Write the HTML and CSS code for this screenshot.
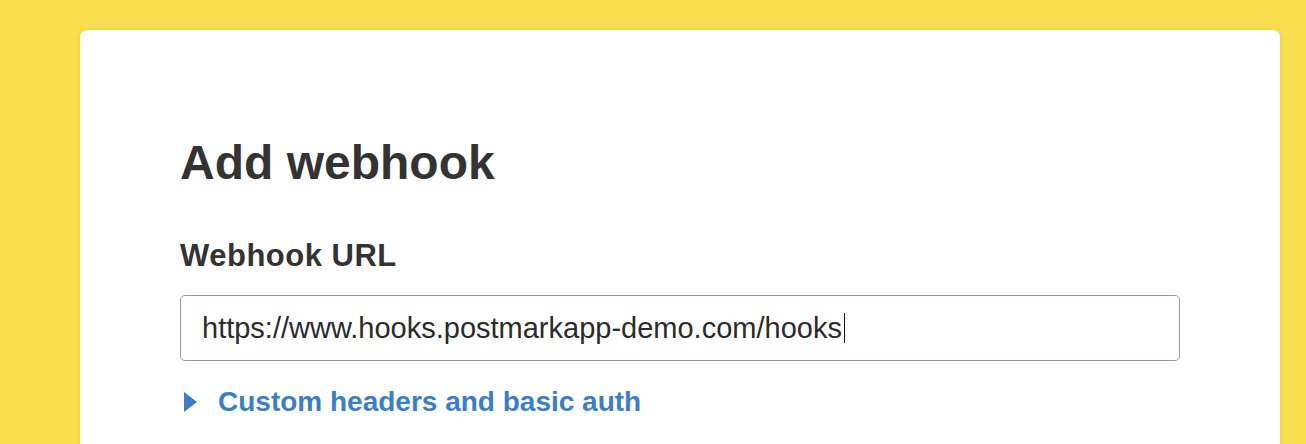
FILE: index.html
```html
<!DOCTYPE html>
<html lang="en">
<head>
<meta charset="utf-8">
<title>Add webhook</title>
<link rel="stylesheet" href="styles.css">
</head>
<body>
<main class="card">
  <h1 class="title">Add webhook</h1>
  <form class="form">
    <label class="label" for="url">Webhook URL</label>
    <div class="input"><span class="input-text">https://www.hooks.postmarkapp-demo.com/hooks</span><span class="caret"></span></div>
    <a class="toggle" href="#">
      <svg class="tri" width="13" height="20" viewBox="0 0 13 20"><polygon points="0,0 13,10 0,20" fill="#3a7ec8"/></svg>
      <span>Custom headers and basic auth</span>
    </a>
  </form>
</main>
</body>
</html>
```

FILE: styles.css
```css
html, body {
  margin: 0;
  padding: 0;
  background: #f9df4f;
  height: 100%;
  overflow: hidden;
}
body {
  font-family: "Liberation Sans", Arial, Helvetica, sans-serif;
  color: #333333;
}
.card {
  box-sizing: border-box;
  margin: 30px 0 0 80px;
  width: 1200px;
  height: 414px;
  background: #ffffff;
  border-radius: 7px 7px 0 0;
  padding: 105px 100px 0 100px;
  box-shadow: 0 0 4px rgba(180, 150, 20, 0.25);
}
.title {
  margin: 0;
  font-size: 48px;
  line-height: 56px;
  font-weight: 700;
  color: #333333;
}
.form {
  display: flex;
  flex-direction: column;
  margin-top: 49px;
}
.label {
  font-size: 31px;
  line-height: 32px;
  letter-spacing: 0.5px;
  font-weight: 700;
  color: #333333;
}
.input {
  box-sizing: border-box;
  margin-top: 23px;
  width: 1000px;
  height: 66px;
  border: 1px solid #959aa6;
  border-radius: 5px;
  padding: 0 0 0 21px;
  display: flex;
  align-items: center;
  font-size: 29px;
  color: #2b2b2b;
}
.caret {
  display: inline-block;
  width: 1px;
  height: 30px;
  background: #111;
  margin-left: 2px;
}
.toggle {
  margin-top: 26px;
  display: flex;
  align-items: center;
  gap: 21px;
  padding-left: 4px;
  text-decoration: none;
  color: #3a7ec8;
  font-size: 28px;
  line-height: 30px;
  font-weight: 700;
}
.tri {
  display: block;
  flex: none;
}
```
